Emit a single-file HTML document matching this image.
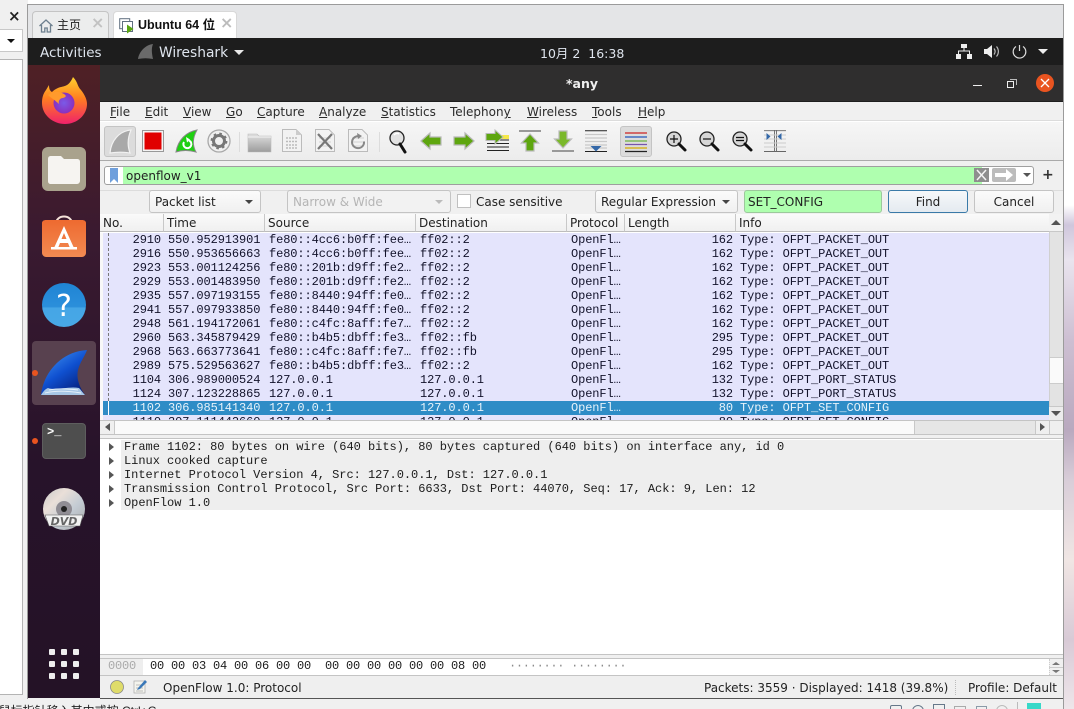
<!DOCTYPE html>
<html><head><meta charset="utf-8"><style>
html,body{margin:0;padding:0;width:1074px;height:709px;overflow:hidden;background:#fff}
body{position:relative;font-family:"DejaVu Sans","Noto Sans CJK SC",sans-serif;color:#222}
.a,.a *,.btn,.h{box-sizing:border-box}
.a{position:absolute}
.t{position:absolute;white-space:pre;font-size:12px;line-height:16px}
svg{position:absolute;overflow:visible}
.r{position:absolute;left:103px;width:946px;height:14px;background:#e4e4fc;font-family:"Liberation Mono",monospace;font-size:12px;line-height:15px;letter-spacing:-.1px;color:#12122a}
.r span{position:absolute;top:0;white-space:pre}
.r .n{right:888px}.r .ti{left:65px}.r .s{left:166px}.r .d{left:317px}.r .p{left:468px}.r .l{right:316px}.r .i{left:637px}
.sel{background:#2e8cc6;color:#e6f2fa}
.h{position:absolute;top:214px;height:18px;background:linear-gradient(#fafafa,#f0f0f0);border-right:1px solid #c8c8c8;border-bottom:1px solid #bdbdbd;font-size:12px;line-height:19px;padding-left:3px;white-space:pre}
.btn{position:absolute;border:1px solid #c4c4c4;border-radius:3px;background:linear-gradient(#fbfbfb,#f0f0f0);font-size:12px;line-height:22px;white-space:pre}
.d1{position:absolute;left:124px;font-family:"Liberation Mono",monospace;font-size:12px;line-height:14px;white-space:pre;color:#1c1c1c;letter-spacing:-.025px}
.tri{position:absolute;left:109px;width:0;height:0;border-left:5px solid #555;border-top:4px solid transparent;border-bottom:4px solid transparent}
.mi{position:absolute;top:104px;font-size:12px;line-height:16px;white-space:pre;color:#2a2a2a}
</style></head><body>

<!-- wallpaper right -->
<div class="a" style="left:1063px;top:0;width:11px;height:709px;background:linear-gradient(#fff 0,#fff 205px,#cfc6dc 225px,#e9e4ee 260px,#cdbfd2 340px,#b9a9bf 430px,#d8cdd8 480px,#f0e6e4 560px,#d8cad6 640px,#eee6ea 709px)"></div>

<!-- left vmware panel -->
<div class="a" style="left:0;top:0;width:28px;height:709px;background:#f0f0f0"></div>
<div class="t" style="left:8px;top:8px;font-size:15px;font-weight:bold;color:#222">×</div>
<div class="a" style="left:-2px;top:29px;width:25px;height:23px;background:#fff;border:1px solid #c8c8c8"></div>
<div class="a" style="left:7px;top:39px;border-left:4px solid transparent;border-right:4px solid transparent;border-top:4px solid #111;width:0;height:0"></div>
<div class="a" style="left:-2px;top:59px;width:25px;height:636px;background:#fff;border:1px solid #b4b4b4"></div>

<!-- outer window -->
<div class="a" style="left:27px;top:4px;width:1037px;height:705px;background:#f0f0f0;border:1px solid #9b9b9b;border-bottom:0"></div>
<div class="a" style="left:28px;top:5px;width:1035px;height:33px;background:#e4e5e7"></div>
<!-- tabs -->
<div class="a" style="left:32px;top:11px;width:77px;height:27px;background:#eceded;border:1px solid #c4c4c4;border-bottom:0;border-radius:4px 4px 0 0"></div>
<svg style="left:38px;top:18px" width="16" height="16" viewBox="0 0 16 16"><path d="M1.500 8 8 2l6.500 6M3.500 7v7h3.300v-4h2.400v4h3.300V7" fill="none" stroke="#6d7f8e" stroke-width="1.300"/></svg>
<div class="t" style="left:57px;top:17px;font-size:12px;color:#222">主页</div>
<div class="t" style="left:91px;top:15px;font-size:16px;color:#c2c2c2;font-weight:bold">×</div>
<div class="a" style="left:113px;top:11px;width:124px;height:27px;background:#fff;border-radius:4px 4px 0 0;border:1px solid #d8d8d8;border-bottom:0"></div>
<svg style="left:119px;top:18px" width="16" height="16" viewBox="0 0 16 16"><rect x=".7" y=".7" width="10" height="10" fill="#fff" stroke="#607080"/><rect x="3.500" y="3.500" width="10" height="10" fill="#fff" stroke="#607080"/><path d="M8 6.500v9l6.500-4.500z" fill="#5aa512"/></svg>
<div class="t" style="left:138px;top:17px;font-size:12.500px;font-weight:bold;color:#111;font-family:'Liberation Sans','Noto Sans CJK SC',sans-serif">Ubuntu 64 位</div>
<div class="t" style="left:220px;top:15px;font-size:16px;color:#bcbcbc;font-weight:bold">×</div>

<!-- gnome top bar -->
<div class="a" style="left:28px;top:38px;width:1035px;height:27px;background:#1d1d1d"></div>
<div class="t" style="left:40px;top:45px;font-size:13.500px;color:#dfe5ee">Activities</div>
<svg style="left:137px;top:43px" width="17" height="17" viewBox="0 0 17 17"><path d="M1 16C2 9 8 2 16 1c-2 5-1 10 0 15-5-1-10-1-15 0z" fill="#6a6a6a"/></svg>
<div class="t" style="left:159px;top:45px;font-size:13.800px;color:#dfe5ee">Wireshark</div>
<div class="a" style="left:234px;top:50px;border-left:5px solid transparent;border-right:5px solid transparent;border-top:5px solid #e8e8e8;width:0;height:0"></div>
<div class="t" style="left:540px;top:46px;font-size:12.500px;color:#dfe5ee">10月 2  16:38</div>
<svg style="left:956px;top:44px" width="16" height="15" viewBox="0 0 16 15"><path d="M5 0h6v4H5zM0 10h5v5H0zM11 10h5v5h-5z" fill="#eee"/><path d="M8 4v3M2.500 10V7h11v3" fill="none" stroke="#eee"/></svg>
<svg style="left:984px;top:44px" width="16" height="15" viewBox="0 0 16 15"><path d="M0 5h3l5-4v13l-5-4H0z" fill="#eee"/><path d="M10 4.500c1.500 2 1.500 4 0 6M12.500 2.500c2.500 3 2.500 7 0 10" fill="none" stroke="#bbb" stroke-width="1.200"/></svg>
<svg style="left:1012px;top:44px" width="15" height="15" viewBox="0 0 15 15"><path d="M7.500 1v6M4 2.500a6.300 6.300 0 1 0 7 0" fill="none" stroke="#ddd" stroke-width="1.200"/></svg>
<div class="a" style="left:1038px;top:49px;border-left:5px solid transparent;border-right:5px solid transparent;border-top:5px solid #eee;width:0;height:0"></div>

<!-- dock -->
<div class="a" style="left:28px;top:65px;width:72px;height:633px;background:linear-gradient(#4f2025,#3a1a30 170px,#27132a 400px,#241226)"></div>
<!-- firefox -->
<svg style="left:41px;top:76px" width="48" height="48" viewBox="0 0 48 48"><defs><linearGradient id="ff" x1="0" y1="0" x2="0" y2="1"><stop offset="0" stop-color="#ffd22e"/><stop offset=".45" stop-color="#ff7f20"/><stop offset="1" stop-color="#f0216b"/></linearGradient><radialGradient id="fp" cx=".5" cy=".5" r=".55"><stop offset="0" stop-color="#7a5be8"/><stop offset="1" stop-color="#8c2bb8"/></radialGradient></defs><path d="M32 1c5 5 4 9 8 13 4 5 6 10 6 14 0 11-10 20-22 20S1 39 1 27c0-5 1-9 4-13l3-5c0 4 1 6 3 7 2-2 5-4 9-5 4-1 8-1 12-10z" fill="url(#ff)"/><circle cx="23" cy="27" r="10.500" fill="url(#fp)"/><path d="M7 19c5-4 11-4 16-1 3 2 2 3-1 4-3 0-5 3-4 6-4-4-8-6-11-9z" fill="#ff9a2c"/></svg>
<!-- files -->
<svg style="left:42px;top:147px" width="44" height="44" viewBox="0 0 44 44"><rect width="44" height="44" rx="6" fill="#a9a28d"/><path d="M6 12c0-2 1-3 3-3h10l3 3h13c2 0 3 1 3 3v19c0 1-1 3-3 3H9c-2 0-3-1-3-3z" fill="#f6f4f1"/></svg>
<!-- software -->
<svg style="left:42px;top:213px" width="44" height="44" viewBox="0 0 44 44"><defs><linearGradient id="sw" x1="0" y1="0" x2="0" y2="1"><stop offset="0" stop-color="#ee6a30"/><stop offset="1" stop-color="#f28a52"/></linearGradient></defs><path d="M14 11c0-10 16-10 16 0" fill="none" stroke="#f6e4da" stroke-width="2"/><path d="M0 10c0-2 2-3 4-3h36c2 0 4 1 4 3v30c0 2-2 4-4 4H4c-2 0-4-2-4-4z" fill="url(#sw)"/><path d="M22 13 12 35h4l2-5h8l2 5h4zM19.500 26l2.500-6 2.500 6z" fill="#fff"/><path d="M9 34h26v2.500H9z" fill="#fff"/></svg>
<!-- help -->
<svg style="left:42px;top:283px" width="44" height="44" viewBox="0 0 44 44"><defs><linearGradient id="hb" x1="0" y1="0" x2="0" y2="1"><stop offset="0" stop-color="#1f84d4"/><stop offset=".55" stop-color="#2b8fdb"/><stop offset=".56" stop-color="#45a6e6"/><stop offset="1" stop-color="#48a8e6"/></linearGradient></defs><circle cx="22" cy="22" r="22" fill="url(#hb)"/><text x="22" y="33" text-anchor="middle" font-family="DejaVu Sans" font-size="30" fill="#fff">?</text></svg>
<!-- wireshark -->
<div class="a" style="left:32px;top:341px;width:64px;height:64px;background:#58414f;border-radius:4px"></div>
<svg style="left:41px;top:350px" width="47" height="46" viewBox="0 0 47 46"><defs><linearGradient id="ws" x1="0" y1="0" x2=".7" y2="1"><stop offset="0" stop-color="#4aa0f6"/><stop offset=".55" stop-color="#0f50d0"/><stop offset="1" stop-color="#06207e"/></linearGradient></defs><path d="M0 45C2 25 18 2 46 0c-2 6-7 12-9 20-2 9 2 18 7 25z" fill="url(#ws)"/><path d="M0 45c2-3 4-6 7-7 8 3 20-2 31 0 2 2 4 5 6 7z" fill="#a8c8e6"/><path d="M4 43c12-3 24-2 36 0M8 40c10-2 20-1 29 0" fill="none" stroke="#e8f2fa" stroke-width=".9"/></svg>
<div class="a" style="left:32px;top:370px;width:6px;height:6px;background:#e9541f;border-radius:50%"></div>
<!-- terminal -->
<div class="a" style="left:42px;top:423px;width:44px;height:36px;background:#4e4e4e;border-radius:4px;border:1px solid #5e5e5e"></div>
<div class="t" style="left:47px;top:424px;font-size:12px;color:#fff;font-family:'Liberation Mono',monospace;font-weight:bold">&gt;_</div>
<div class="a" style="left:32px;top:438px;width:6px;height:6px;background:#e9541f;border-radius:50%"></div>
<!-- dvd -->
<svg style="left:43px;top:488px" width="42" height="42" viewBox="0 0 42 42"><defs><linearGradient id="dv" x1="0" y1="0" x2="1" y2="1"><stop offset="0" stop-color="#c8c8c8"/><stop offset=".3" stop-color="#eadfd8"/><stop offset=".6" stop-color="#c4ccd4"/><stop offset="1" stop-color="#a8a8a8"/></linearGradient></defs><circle cx="21" cy="21" r="21" fill="url(#dv)"/><circle cx="21" cy="21" r="8" fill="#908d94"/><circle cx="21" cy="21" r="3" fill="#222"/><path d="M2 27h38l-3 11H6z" fill="#f2f2f2" stroke="#555" stroke-width=".6"/><text x="21" y="37" text-anchor="middle" font-family="DejaVu Sans" font-size="11" font-weight="bold" font-style="italic" fill="#666">DVD</text></svg>
<!-- apps grid -->
<svg style="left:49px;top:649px" width="31" height="31" viewBox="0 0 31 31" fill="#eee"><rect width="6" height="6" rx="1"/><rect x="12" width="6" height="6" rx="1"/><rect x="24" width="6" height="6" rx="1"/><rect y="12" width="6" height="6" rx="1"/><rect x="12" y="12" width="6" height="6" rx="1"/><rect x="24" y="12" width="6" height="6" rx="1"/><rect y="24" width="6" height="6" rx="1"/><rect x="12" y="24" width="6" height="6" rx="1"/><rect x="24" y="24" width="6" height="6" rx="1"/></svg>

<!-- title bar -->
<div class="a" style="left:100px;top:65px;width:963px;height:37px;background:#2f2e2e;border-bottom:1px solid #1e1e1e"></div>
<div class="t" style="left:566px;top:76px;font-size:12.500px;font-weight:bold;color:#efefef">*any</div>
<div class="a" style="left:973px;top:85px;width:9px;height:1px;background:#eee"></div>
<div class="a" style="left:1007px;top:81px;width:7px;height:7px;border:1px solid #eee"></div>
<div class="a" style="left:1010px;top:79px;width:6px;height:1px;background:#bbb"></div>
<div class="a" style="left:1016px;top:79px;width:1px;height:6px;background:#bbb"></div>
<div class="a" style="left:1036px;top:74px;width:18px;height:18px;border-radius:50%;background:#e95420"></div>
<svg style="left:1040px;top:78px" width="10" height="10" viewBox="0 0 10 10"><path d="M1 1l8 8M9 1l-8 8" stroke="#fff" stroke-width="1.300"/></svg>

<!-- main wireshark bg -->
<div class="a" style="left:100px;top:102px;width:963px;height:596px;background:#fff"></div>
<div class="a" style="left:100px;top:102px;width:963px;height:19px;background:#f0f0f0;border-bottom:1px solid #dcdcdc"></div>
<div class="mi" style="left:110px"><u>F</u>ile</div>
<div class="mi" style="left:145px"><u>E</u>dit</div>
<div class="mi" style="left:183px"><u>V</u>iew</div>
<div class="mi" style="left:226px"><u>G</u>o</div>
<div class="mi" style="left:257px"><u>C</u>apture</div>
<div class="mi" style="left:319px"><u>A</u>nalyze</div>
<div class="mi" style="left:381px"><u>S</u>tatistics</div>
<div class="mi" style="left:450px">Telephon<u>y</u></div>
<div class="mi" style="left:527px"><u>W</u>ireless</div>
<div class="mi" style="left:592px"><u>T</u>ools</div>
<div class="mi" style="left:638px"><u>H</u>elp</div>

<!-- toolbar -->
<div class="a" style="left:100px;top:122px;width:963px;height:39px;background:linear-gradient(#f6f6f6,#ececec);border-bottom:1px solid #aaa"></div>
<div class="a" style="left:104px;top:126px;width:32px;height:31px;background:#dcdcdc;border:1px solid #c4c4c4;border-radius:3px"></div>
<svg style="left:109px;top:129px" width="23" height="25" viewBox="0 0 23 25"><path d="M1 24C2 12 10 2 22 1c-3 7-4 15-1 23-6-1-14-1-20 0z" fill="#a9a9a9" stroke="#f2f2f2" stroke-width="1.200"/></svg>
<svg style="left:142px;top:130px" width="22" height="22" viewBox="0 0 22 22"><rect x=".5" y=".5" width="21" height="21" fill="#f4f4f4" stroke="#999"/><rect x="2.500" y="2.500" width="17" height="17" fill="#e00000"/></svg>
<svg style="left:175px;top:129px" width="23" height="24" viewBox="0 0 23 24"><path d="M1 23C3 11 11 3 22 1c-4 7-5 15-1 22-7-2-14-2-20 0z" fill="#1ed011" stroke="#888" stroke-width="1"/><path d="M9 13a4 4 0 1 0 5-1.500" fill="none" stroke="#fff" stroke-width="2"/><path d="M11 8l4 2.500-3 3z" fill="#fff"/></svg>
<svg style="left:207px;top:129px" width="24" height="24" viewBox="0 0 24 24"><circle cx="12" cy="12" r="11" fill="#f0f0f0" stroke="#a8a8a8" stroke-width="1.300"/><circle cx="12" cy="12" r="5.500" fill="none" stroke="#777" stroke-width="3"/><circle cx="12" cy="12" r="7.500" fill="none" stroke="#777" stroke-width="1.800" stroke-dasharray="2.600 3.300"/></svg>
<div class="a" style="left:239px;top:132px;width:1px;height:20px;background:#dcdcdc"></div>
<svg style="left:248px;top:132px" width="23" height="20" viewBox="0 0 23 20"><defs><linearGradient id="fo" x1="0" y1="0" x2="0" y2="1"><stop offset="0" stop-color="#e0e0e0"/><stop offset="1" stop-color="#9c9c9c"/></linearGradient></defs><path d="M0 2h9l2 2h12v16H0z" fill="url(#fo)" stroke="#bbb" stroke-width=".6"/><path d="M0 5h23" stroke="#f4f4f4"/></svg>
<svg style="left:282px;top:129px" width="20" height="23" viewBox="0 0 20 23"><path d="M.5.500H14L19.500 6v16.500H.5z" fill="#f2f2f2" stroke="#bbb"/><path d="M14 .5V6h5.500z" fill="#ccc"/><path d="M4 9h12M4 12.500h12M4 16h12M4 19h12" stroke="#bbb" stroke-width="1.500" stroke-dasharray="2 1"/></svg>
<svg style="left:315px;top:129px" width="20" height="23" viewBox="0 0 20 23"><path d="M.5.500H14L19.500 6v16.500H.5z" fill="#f2f2f2" stroke="#bbb"/><path d="M4 9h12M4 13h12M4 17h12" stroke="#ddd" stroke-width="1.500"/><path d="M3 5l14 15M17 5 3 20" stroke="#777" stroke-width="2.200"/></svg>
<svg style="left:348px;top:129px" width="20" height="23" viewBox="0 0 20 23"><path d="M.5.500H14L19.500 6v16.500H.5z" fill="#f2f2f2" stroke="#bbb"/><path d="M4 9h12M4 13h12M4 17h12" stroke="#ddd" stroke-width="1.500"/><path d="M12 7.500a6 6 0 1 0 4 5" fill="none" stroke="#888" stroke-width="2"/><path d="M9 4l5 3-4 3z" fill="#888"/></svg>
<div class="a" style="left:379px;top:132px;width:1px;height:20px;background:#dcdcdc"></div>
<svg style="left:389px;top:130px" width="18" height="23" viewBox="0 0 18 23"><circle cx="8" cy="8" r="7" fill="#e2e2e2" stroke="#222" stroke-width="1.300"/><path d="M5 5a4 4 0 0 1 5-1" stroke="#fff" stroke-width="1.500" fill="none"/><path d="M11 14l5 8" stroke="#111" stroke-width="3" stroke-linecap="round"/></svg>
<svg style="left:420px;top:132px" width="22" height="18" viewBox="0 0 22 18"><path d="M1 9l9-8v4h11v8H10v4z" fill="#5ea60f" stroke="#b8b8b8" stroke-width="1.200"/></svg>
<svg style="left:453px;top:132px" width="22" height="18" viewBox="0 0 22 18"><path d="M21 9l-9-8v4H1v8h11v4z" fill="#5ea60f" stroke="#b8b8b8" stroke-width="1.200"/></svg>
<svg style="left:485px;top:130px" width="25" height="23" viewBox="0 0 25 23"><path d="M2 10h22M2 13.500h22M2 17h22M2 20.500h22M14 6h10" stroke="#222" stroke-width="1.100"/><rect x="14" y="5" width="10" height="4" fill="#f6e84a"/><path d="M18 7l-8-7v3.500H1v7h9V14z" fill="#5ea60f" stroke="#bbb"/></svg>
<svg style="left:519px;top:130px" width="22" height="22" viewBox="0 0 22 22"><path d="M0 1h22" stroke="#999" stroke-width="2"/><path d="M11 4 2.500 13H7v8h8v-8h4.500z" fill="#5ea60f" stroke="#bbb" stroke-width="1.200"/></svg>
<svg style="left:552px;top:130px" width="22" height="22" viewBox="0 0 22 22"><path d="M0 21h22" stroke="#999" stroke-width="2"/><path d="M11 18 2.500 9H7V1h8v8h4.500z" fill="#7ab82a" stroke="#bbb" stroke-width="1.200"/></svg>
<svg style="left:585px;top:130px" width="22" height="22" viewBox="0 0 22 22"><path d="M0 .7h22M0 21.500h22" stroke="#222"/><path d="M0 4.500h22M0 8h22M0 11.500h22M0 15h22M0 18h22" stroke="#c8c8c8" stroke-width="1.200"/><path d="M5.500 16h11L11 21.500z" fill="#3468a8"/></svg>
<div class="a" style="left:620px;top:126px;width:32px;height:31px;background:#dcdcdc;border:1px solid #c4c4c4;border-radius:3px"></div>
<svg style="left:625px;top:132px" width="22" height="20" viewBox="0 0 22 20" stroke-width="1.200"><path d="M0 1h22" stroke="#cc2222"/><path d="M0 5h22" stroke="#2255bb"/><path d="M0 9h22" stroke="#6db33f"/><path d="M0 12.500h22" stroke="#7755aa"/><path d="M0 16h22" stroke="#d4a800"/><path d="M0 19.500h22" stroke="#222"/></svg>
<svg style="left:666px;top:131px" width="21" height="21" viewBox="0 0 21 21"><circle cx="8" cy="8" r="7" fill="#d6d6d6" stroke="#222" stroke-width="1.300"/><path d="M4 8h8M8 4v8" stroke="#111" stroke-width="1.200"/><path d="M13 13l6 6" stroke="#111" stroke-width="3" stroke-linecap="round"/></svg>
<svg style="left:699px;top:131px" width="21" height="21" viewBox="0 0 21 21"><circle cx="8" cy="8" r="7" fill="#d6d6d6" stroke="#222" stroke-width="1.300"/><path d="M4 8h8" stroke="#111" stroke-width="1.200"/><path d="M13 13l6 6" stroke="#111" stroke-width="3" stroke-linecap="round"/></svg>
<svg style="left:732px;top:131px" width="21" height="21" viewBox="0 0 21 21"><circle cx="8" cy="8" r="7" fill="#d6d6d6" stroke="#222" stroke-width="1.300"/><path d="M4 6.500h8M4 9.500h8" stroke="#111" stroke-width="1.200"/><path d="M13 13l6 6" stroke="#111" stroke-width="3" stroke-linecap="round"/></svg>
<svg style="left:764px;top:130px" width="22" height="22" viewBox="0 0 22 22"><path d="M0 .7h22M0 21.500h22M10.500 0v22M12.500 0v22" stroke="#666" stroke-width=".9" fill="none"/><path d="M0 5h22M0 9h22M0 13h22M0 17h22" stroke="#ccc"/><path d="M2.500 3v7l4-3.500zM17.500 3v7l-4-3.500z" fill="#3468a8"/></svg>

<!-- filter -->
<div class="a" style="left:100px;top:161px;width:963px;height:29px;background:#f0f0f0"></div>
<div class="a" style="left:104px;top:166px;width:930px;height:19px;background:#fff;border:1px solid #9f9f9f;border-radius:3px"></div>
<div class="a" style="left:123px;top:167px;width:859px;height:17px;background:#afffaf"></div>
<svg style="left:109px;top:168px" width="10" height="15" viewBox="0 0 10 15"><path d="M1 0h8v15L5 11l-4 4z" fill="#6f9fdc"/></svg>
<div class="t" style="left:126px;top:168px;font-size:12px">openflow_v1</div>
<div class="a" style="left:974px;top:168px;width:15px;height:14px;background:#8e8e8e"></div>
<svg style="left:976px;top:169px" width="11" height="12" viewBox="0 0 11 12"><path d="M1 1l9 10M10 1 1 11" stroke="#f4f4f4" stroke-width="1.500"/></svg>
<div class="a" style="left:992px;top:168px;width:24px;height:14px;background:#bcbcbc;border-radius:2px"></div>
<svg style="left:995px;top:169px" width="18" height="12" viewBox="0 0 18 12"><path d="M0 4h11V0l7 6-7 6V8H0z" fill="#fff"/></svg>
<div class="a" style="left:1023px;top:173px;border-left:4px solid transparent;border-right:4px solid transparent;border-top:4px solid #555;width:0;height:0"></div>
<div class="t" style="left:1042px;top:167px;font-size:14px;font-weight:bold;color:#333">+</div>

<!-- find bar -->
<div class="a" style="left:100px;top:190px;width:963px;height:24px;background:#f0f0f0;border-top:1px solid #dcdcdc"></div>
<div class="btn" style="left:149px;top:190px;width:112px;height:23px;padding-left:5px">Packet list</div>
<div class="a" style="left:245px;top:200px;border-left:4px solid transparent;border-right:4px solid transparent;border-top:4px solid #444;width:0;height:0"></div>
<div class="btn" style="left:287px;top:190px;width:164px;height:23px;padding-left:5px;color:#b5b5b5;background:#f2f2f2">Narrow &amp; Wide</div>
<div class="a" style="left:435px;top:200px;border-left:4px solid transparent;border-right:4px solid transparent;border-top:4px solid #bbb;width:0;height:0"></div>
<div class="a" style="left:457px;top:194px;width:14px;height:14px;background:#fff;border:1px solid #c0c0c0"></div>
<div class="t" style="left:476px;top:194px">Case sensitive</div>
<div class="btn" style="left:595px;top:190px;width:143px;height:23px;padding-left:5px">Regular Expression</div>
<div class="a" style="left:722px;top:200px;border-left:4px solid transparent;border-right:4px solid transparent;border-top:4px solid #444;width:0;height:0"></div>
<div class="btn" style="left:744px;top:190px;width:138px;height:23px;padding-left:3px;background:#afffaf;border-color:#9cc99c">SET_CONFIG</div>
<div class="btn" style="left:888px;top:190px;width:80px;height:23px;text-align:center;border-color:#3a7aa8;background:linear-gradient(#f6f8fa,#e4eaf0)">Find</div>
<div class="btn" style="left:974px;top:190px;width:80px;height:23px;text-align:center">Cancel</div>

<!-- header -->
<div class="h" style="left:100px;width:64px">No.</div>
<div class="h" style="left:164px;width:101px">Time</div>
<div class="h" style="left:265px;width:151px">Source</div>
<div class="h" style="left:416px;width:151px">Destination</div>
<div class="h" style="left:567px;width:58px">Protocol</div>
<div class="h" style="left:625px;width:111px">Length</div>
<div class="h" style="left:736px;width:313px;border-right:0">Info</div>

<!-- packet rows -->
<div class="a" style="left:100px;top:232px;width:949px;height:188px;overflow:hidden;background:#fff">
<div style="position:absolute;left:-100px;top:-232px;width:1074px;height:709px">
<div class="a" style="left:100px;top:233px;width:3px;height:188px;background:#f8f8f8"></div>
<div class="r" style="top:233px"><span class="n">2910</span><span class="ti">550.952913901</span><span class="s">fe80::4cc6:b0ff:fee…</span><span class="d">ff02::2</span><span class="p">OpenFl…</span><span class="l">162</span><span class="i">Type: OFPT_PACKET_OUT</span></div>
<div class="r" style="top:247px"><span class="n">2916</span><span class="ti">550.953656663</span><span class="s">fe80::4cc6:b0ff:fee…</span><span class="d">ff02::2</span><span class="p">OpenFl…</span><span class="l">162</span><span class="i">Type: OFPT_PACKET_OUT</span></div>
<div class="r" style="top:261px"><span class="n">2923</span><span class="ti">553.001124256</span><span class="s">fe80::201b:d9ff:fe2…</span><span class="d">ff02::2</span><span class="p">OpenFl…</span><span class="l">162</span><span class="i">Type: OFPT_PACKET_OUT</span></div>
<div class="r" style="top:275px"><span class="n">2929</span><span class="ti">553.001483950</span><span class="s">fe80::201b:d9ff:fe2…</span><span class="d">ff02::2</span><span class="p">OpenFl…</span><span class="l">162</span><span class="i">Type: OFPT_PACKET_OUT</span></div>
<div class="r" style="top:289px"><span class="n">2935</span><span class="ti">557.097193155</span><span class="s">fe80::8440:94ff:fe0…</span><span class="d">ff02::2</span><span class="p">OpenFl…</span><span class="l">162</span><span class="i">Type: OFPT_PACKET_OUT</span></div>
<div class="r" style="top:303px"><span class="n">2941</span><span class="ti">557.097933850</span><span class="s">fe80::8440:94ff:fe0…</span><span class="d">ff02::2</span><span class="p">OpenFl…</span><span class="l">162</span><span class="i">Type: OFPT_PACKET_OUT</span></div>
<div class="r" style="top:317px"><span class="n">2948</span><span class="ti">561.194172061</span><span class="s">fe80::c4fc:8aff:fe7…</span><span class="d">ff02::2</span><span class="p">OpenFl…</span><span class="l">162</span><span class="i">Type: OFPT_PACKET_OUT</span></div>
<div class="r" style="top:331px"><span class="n">2960</span><span class="ti">563.345879429</span><span class="s">fe80::b4b5:dbff:fe3…</span><span class="d">ff02::fb</span><span class="p">OpenFl…</span><span class="l">295</span><span class="i">Type: OFPT_PACKET_OUT</span></div>
<div class="r" style="top:345px"><span class="n">2968</span><span class="ti">563.663773641</span><span class="s">fe80::c4fc:8aff:fe7…</span><span class="d">ff02::fb</span><span class="p">OpenFl…</span><span class="l">295</span><span class="i">Type: OFPT_PACKET_OUT</span></div>
<div class="r" style="top:359px"><span class="n">2989</span><span class="ti">575.529563627</span><span class="s">fe80::b4b5:dbff:fe3…</span><span class="d">ff02::2</span><span class="p">OpenFl…</span><span class="l">162</span><span class="i">Type: OFPT_PACKET_OUT</span></div>
<div class="r" style="top:373px"><span class="n">1104</span><span class="ti">306.989000524</span><span class="s">127.0.0.1</span><span class="d">127.0.0.1</span><span class="p">OpenFl…</span><span class="l">132</span><span class="i">Type: OFPT_PORT_STATUS</span></div>
<div class="r" style="top:387px"><span class="n">1124</span><span class="ti">307.123228865</span><span class="s">127.0.0.1</span><span class="d">127.0.0.1</span><span class="p">OpenFl…</span><span class="l">132</span><span class="i">Type: OFPT_PORT_STATUS</span></div>
<div class="r sel" style="top:401px"><span class="n">1102</span><span class="ti">306.985141340</span><span class="s">127.0.0.1</span><span class="d">127.0.0.1</span><span class="p">OpenFl…</span><span class="l">80</span><span class="i">Type: OFPT_SET_CONFIG</span></div>
<div class="r" style="top:415px"><span class="n">1110</span><span class="ti">307.111442660</span><span class="s">127.0.0.1</span><span class="d">127.0.0.1</span><span class="p">OpenFl…</span><span class="l">80</span><span class="i">Type: OFPT_SET_CONFIG</span></div>
<div class="a" style="left:108px;top:233px;width:0;height:168px;border-left:1px dashed #777"></div>
<div class="a" style="left:108px;top:401px;width:1px;height:14px;background:#fff"></div>
</div></div>

<!-- v scrollbar -->
<div class="a" style="left:1049px;top:214px;width:14px;height:206px;background:#e3e3e3;border-left:1px solid #d0d0d0"></div>
<div class="a" style="left:1049px;top:214px;width:14px;height:18px;background:#f2f2f2;border-bottom:1px solid #c8c8c8"></div>
<div class="a" style="left:1051px;top:220px;border-left:5px solid transparent;border-right:5px solid transparent;border-bottom:5px solid #555;width:0;height:0"></div>
<div class="a" style="left:1049px;top:357px;width:14px;height:27px;background:#fafafa;border:1px solid #ccc;border-right:0"></div>
<div class="a" style="left:1049px;top:406px;width:14px;height:14px;background:#ececec;border-top:1px solid #c8c8c8"></div>
<div class="a" style="left:1051px;top:411px;border-left:5px solid transparent;border-right:5px solid transparent;border-top:5px solid #555;width:0;height:0"></div>
<!-- h scrollbar -->
<div class="a" style="left:100px;top:420px;width:963px;height:15px;background:#fafafa;border-top:1px solid #c4c4c4;border-bottom:1px solid #c4c4c4"></div>
<div class="a" style="left:100px;top:421px;width:15px;height:13px;background:#efefef;border-right:1px solid #c8c8c8"></div>
<div class="a" style="left:105px;top:423px;border-right:5px solid #555;border-top:4px solid transparent;border-bottom:4px solid transparent;width:0;height:0"></div>
<div class="a" style="left:914px;top:421px;width:135px;height:13px;background:#e6e6e6;border-left:1px solid #c8c8c8"></div>
<div class="a" style="left:1035px;top:421px;width:28px;height:13px;background:#efefef;border-left:1px solid #c8c8c8"></div>
<div class="a" style="left:1040px;top:423px;border-left:5px solid #555;border-top:4px solid transparent;border-bottom:4px solid transparent;width:0;height:0"></div>
<div class="a" style="left:1049px;top:421px;width:1px;height:13px;background:#c8c8c8"></div>
<div class="a" style="left:100px;top:435px;width:963px;height:4px;background:#f0f0f0;border-bottom:1px solid #c4c4c4"></div>

<!-- details -->
<div class="a" style="left:121px;top:440px;width:942px;height:70px;background:#eeeeee"></div>
<div class="tri" style="left:109px;top:443px"></div><div class="d1" style="top:440px">Frame 1102: 80 bytes on wire (640 bits), 80 bytes captured (640 bits) on interface any, id 0</div>
<div class="tri" style="left:109px;top:457px"></div><div class="d1" style="top:454px">Linux cooked capture</div>
<div class="tri" style="left:109px;top:471px"></div><div class="d1" style="top:468px">Internet Protocol Version 4, Src: 127.0.0.1, Dst: 127.0.0.1</div>
<div class="tri" style="left:109px;top:485px"></div><div class="d1" style="top:482px">Transmission Control Protocol, Src Port: 6633, Dst Port: 44070, Seq: 17, Ack: 9, Len: 12</div>
<div class="tri" style="left:109px;top:499px"></div><div class="d1" style="top:496px">OpenFlow 1.0</div>

<!-- bytes -->
<div class="a" style="left:100px;top:654px;width:963px;height:5px;background:#f0f0f0;border-top:1px solid #c4c4c4;border-bottom:1px solid #c4c4c4"></div>
<div class="a" style="left:100px;top:659px;width:43px;height:16px;background:#eee"></div>
<div class="d1" style="left:108px;top:659px;color:#aaa;letter-spacing:-.2px">0000</div>
<div class="d1" style="left:150px;top:659px;letter-spacing:-.2px">00 00 03 04 00 06 00 00  00 00 00 00 00 00 08 00</div>
<div class="d1" style="left:509px;top:659px;letter-spacing:-.3px;color:#8a8a8a">········ ········</div>
<div class="a" style="left:1049px;top:659px;width:14px;height:16px;background:#f0f0f0;border-left:1px dotted #ccc"></div>
<div class="a" style="left:1052px;top:662px;border-left:4px solid transparent;border-right:4px solid transparent;border-bottom:3px solid #777;width:0;height:0"></div>
<div class="a" style="left:1052px;top:670px;border-left:4px solid transparent;border-right:4px solid transparent;border-top:3px solid #777;width:0;height:0"></div>
<div class="a" style="left:1049px;top:667px;width:14px;height:1px;background:#ccc"></div>

<!-- status bar -->
<div class="a" style="left:100px;top:675px;width:963px;height:24px;background:#efefef;border-top:1px solid #c4c4c4;border-bottom:1px solid #555"></div>
<svg style="left:110px;top:680px" width="14" height="14" viewBox="0 0 14 14"><circle cx="7" cy="7" r="6.500" fill="#dfdc6a" stroke="#888" stroke-width=".8"/></svg>
<svg style="left:133px;top:679px" width="15" height="15" viewBox="0 0 15 15"><rect x="1" y="2" width="11" height="12" fill="#f4f4ee" stroke="#aaa" stroke-width=".7"/><path d="M3 6h7M3 9h7M3 12h7" stroke="#bbb"/><path d="M5 9l7-8 2 2-7 7-3 1z" fill="#3a78b8"/></svg>
<div class="t" style="left:163px;top:680px">OpenFlow 1.0: Protocol</div>
<div class="t" style="left:704px;top:680px">Packets: 3559 · Displayed: 1418 (39.8%)</div>
<div class="t" style="left:968px;top:680px">Profile: Default</div>
<div class="a" style="left:955px;top:680px;width:0;height:15px;border-left:1px dotted #bbb"></div>

<!-- bottom vmware bar -->
<div class="a" style="left:0;top:699px;width:1063px;height:10px;background:#f0f0f0"></div>
<div class="a" style="left:0;top:699px;width:160px;height:10px;overflow:hidden"><div class="t" style="right:3px;top:4px;font-size:12px;font-family:'Liberation Sans','Noto Sans CJK SC',sans-serif;color:#222">要将输入定向到该虚拟机，请将鼠标指针移入其中或按 Ctrl+G</div></div>
<div class="a" style="left:890px;top:705px;width:12px;height:9px;border:1px solid #66788a;border-radius:2px"></div>
<div class="a" style="left:912px;top:705px;width:12px;height:12px;border:1px solid #66788a;border-radius:50%"></div>
<div class="a" style="left:933px;top:704px;width:12px;height:8px;border:1px solid #66788a"></div>
<div class="a" style="left:954px;top:706px;width:12px;height:8px;border:1px solid #aaa"></div>
<div class="a" style="left:976px;top:706px;width:11px;height:8px;border:1px solid #8a9aa8"></div>
<div class="a" style="left:996px;top:705px;width:12px;height:12px;border:1px solid #bbb;border-radius:50%"></div>
<div class="a" style="left:1017px;top:702px;width:1px;height:7px;background:#bbb"></div>
<div class="a" style="left:1027px;top:703px;width:14px;height:6px;background:#38d8c8"></div>
</body></html>
